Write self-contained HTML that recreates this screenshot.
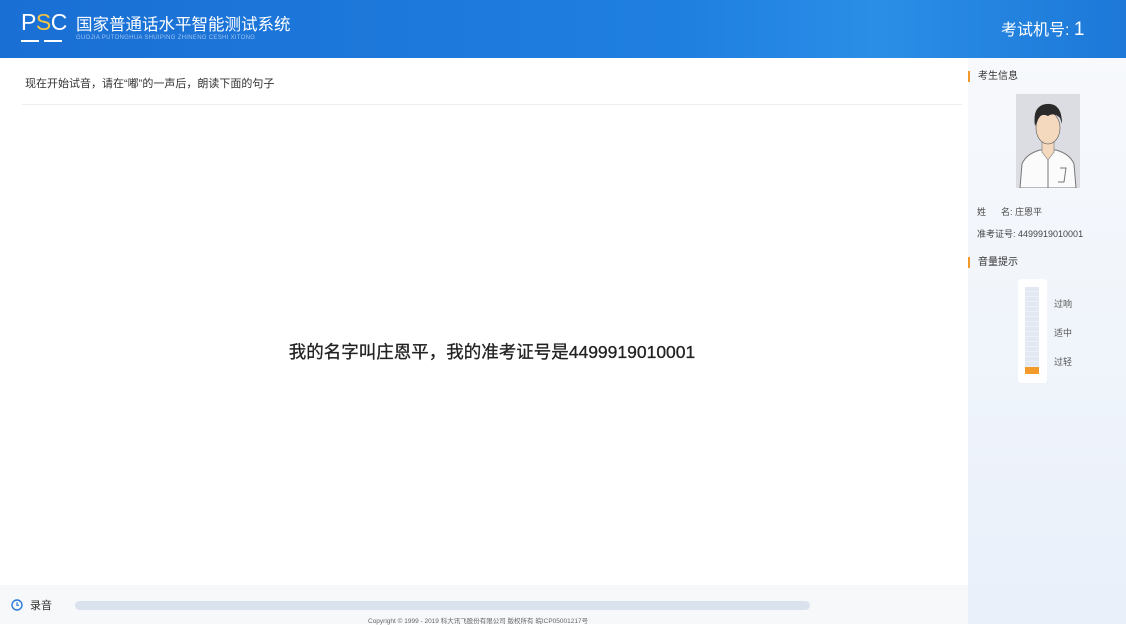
<!DOCTYPE html>
<html><head><meta charset="utf-8"><style>
*{margin:0;padding:0;box-sizing:border-box}
body{width:1126px;height:624px;overflow:hidden;position:relative;font-family:"Liberation Sans","Noto Sans CJK SC",sans-serif;background:#fff;color:#333}
.hdr{position:absolute;left:0;top:0;width:1126px;height:58px;background:linear-gradient(90deg,#1a6fd4 0%,#1f7fe0 60%,#2a8ee6 78%,#1d78d8 100%)}
.logo{position:absolute;left:21px;top:9px;color:#fff;font-size:23px;letter-spacing:-0.5px}
.logo b{color:#f5c542;font-weight:normal}
.logo .l1,.logo .l2{position:absolute;top:31px;height:2px;background:#fff;width:18px}
.title{position:absolute;left:76px;top:11px;color:#fff;font-size:16.5px}
.sub{position:absolute;left:76px;top:35px;color:#9cc4f0;font-size:6px;letter-spacing:.3px}
.num{position:absolute;left:1001px;top:16px;color:#fff;font-size:16px}
.num span{font-size:19px}
.side{position:absolute;left:968px;top:58px;width:158px;height:566px;background:linear-gradient(180deg,#f7f9fc,#e9f0fa)}
.h{position:absolute;font-size:10px;color:#333;padding-left:8px;border-left:2px solid #f39a2b;line-height:11px}
.inst{position:absolute;left:25px;top:75px;font-size:11px;color:#333}
.line{position:absolute;left:22px;top:104px;width:940px;height:1px;background:#eceef1}
.sent{position:absolute;left:0;width:984px;top:339px;text-align:center;font-size:17.5px;color:#222;-webkit-text-stroke:.3px #222}
.bot{position:absolute;left:0;top:585px;width:968px;height:39px;background:#f7f8fa}
.bar{position:absolute;left:75px;top:601px;width:735px;height:9px;border-radius:5px;background:#dae2ee}
</style></head><body>
<div class="hdr">
 <div class="logo">P<b>S</b>C<div class="l1" style="left:0"></div><div class="l2" style="left:23px"></div></div>
 <div class="title">国家普通话水平智能测试系统</div>
 <div class="sub">GUOJIA PUTONGHUA SHUIPING ZHINENG CESHI XITONG</div>
 <div class="num">考试机号: <span>1</span></div>
</div>
<div class="inst">现在开始试音，请在“嘟”的一声后，朗读下面的句子</div>
<div class="line"></div>
<div class="sent">我的名字叫庄恩平，我的准考证号是4499919010001</div>
<div class="side">
 <div class="h" style="left:0;top:13px">考生信息</div>
 <div style="position:absolute;left:48px;top:36px;width:64px;height:94px;background:#dcdde3;overflow:hidden">
  <svg width="64" height="94" viewBox="0 0 64 94">
   <path d="M4 94 L6 70 Q10 60 24 56 L40 56 Q54 60 58 70 L60 94Z" fill="#fbfbfb" stroke="#777"/>
   <path d="M26 48 L26 58 L32 66 L38 58 L38 48Z" fill="#f4d9bf" stroke="#777" stroke-width=".6"/>
   <ellipse cx="32" cy="34" rx="12" ry="16" fill="#f4d9bf" stroke="#555" stroke-width=".6"/>
   <path d="M19 32 Q16 12 30 10 Q46 8 46 30 L44 24 Q38 18 32 22 Q24 18 21 28Z" fill="#2a2a2a"/>
   <path d="M32 66 L32 94 M44 74 L50 74 L48 88 L42 88" stroke="#777" fill="none"/>
  </svg>
 </div>
 <div style="position:absolute;left:9px;top:147px;font-size:9px;color:#444">姓&nbsp;&nbsp;&nbsp;&nbsp;&nbsp;&nbsp;名: 庄恩平</div>
 <div style="position:absolute;left:9px;top:169px;font-size:9px;color:#444">准考证号: 4499919010001</div>
 <div class="h" style="left:0;top:199px">音量提示</div>
 <div style="position:absolute;left:50px;top:221px;width:29px;height:104px;background:#fff;border-radius:3px">
  <div style="position:absolute;left:7px;top:8px;width:14px;height:80px;background:repeating-linear-gradient(180deg,#e3e9f3 0,#e3e9f3 4px,#eef2f8 4px,#eef2f8 5px)"></div>
  <div style="position:absolute;left:7px;top:88px;width:14px;height:7px;background:#f39a2b"></div>
 </div>
 <div style="position:absolute;left:86px;top:239px;font-size:9px;color:#555">过响</div>
 <div style="position:absolute;left:86px;top:268px;font-size:9px;color:#555">适中</div>
 <div style="position:absolute;left:86px;top:297px;font-size:9px;color:#555">过轻</div>
</div>
<div class="bot"></div>
<svg style="position:absolute;left:11px;top:599px" width="12" height="12" viewBox="0 0 12 12"><circle cx="6" cy="6" r="5" fill="none" stroke="#2a7ad8" stroke-width="1.4"/><path d="M6 3.3V6.3H8" fill="none" stroke="#2a7ad8" stroke-width="1.2"/></svg>
<div style="position:absolute;left:30px;top:597px;font-size:11px;color:#333">录音</div>
<div class="bar"></div>
<div style="position:absolute;left:368px;top:615px;font-size:6.5px;color:#666">Copyright © 1999 - 2019 科大讯飞股份有限公司 版权所有 皖ICP05001217号</div>
</body></html>
